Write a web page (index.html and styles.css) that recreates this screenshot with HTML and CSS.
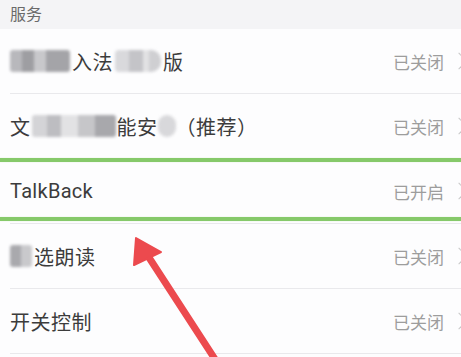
FILE: index.html
```html
<!DOCTYPE html>
<html lang="zh">
<head>
<meta charset="utf-8">
<link rel="stylesheet" href="styles.css">
</head>
<body>
<div class="screen">
  <div class="section-title">服务</div>
  <div class="list">
    <div class="row">
      <div class="label"><span class="mosaic m1"></span>入法<span class="mosaic m2"></span>版</div>
      <div class="status">已关闭<span class="chev"></span></div>
    </div>
    <div class="row">
      <div class="label">文<span class="mosaic m3"></span>能安<span class="mosaic m4"></span>（推荐）</div>
      <div class="status">已关闭<span class="chev"></span></div>
    </div>
    <div class="row">
      <div class="label latin">TalkBack</div>
      <div class="status">已开启<span class="chev"></span></div>
    </div>
    <div class="row">
      <div class="label"><span class="mosaic m5"></span>选朗读</div>
      <div class="status">已关闭<span class="chev"></span></div>
    </div>
    <div class="row">
      <div class="label">开关控制</div>
      <div class="status">已关闭<span class="chev"></span></div>
    </div>
  </div>
  <div class="hl hl-top"></div>
  <div class="hl hl-bottom"></div>
  <svg class="arrow" width="461" height="357" viewBox="0 0 461 357">
    <line x1="148" y1="256" x2="222" y2="370" stroke="#ec4a4e" stroke-width="7" stroke-linecap="round"/>
    <polygon points="136,238 161,252 134,265" fill="#ec4a4e" stroke="#ec4a4e" stroke-width="2" stroke-linejoin="round"/>
  </svg>
</div>
</body>
</html>
```

FILE: styles.css
```css
html, body {
  margin: 0;
  padding: 0;
  background: #fdfdfe;
}
.screen {
  position: relative;
  width: 461px;
  height: 357px;
  overflow: hidden;
  font-family: "Noto Sans CJK SC", "Noto Sans", sans-serif;
  background: #fdfdfe;
}
.section-title {
  height: 29px;
  background: #f4f4f6;
  color: #6a6a6a;
  font-size: 16px;
  line-height: 26px;
  padding-left: 10px;
}
.list {
  display: flex;
  flex-direction: column;
}
.row {
  height: 65px;
  box-sizing: border-box;
  margin-left: 10px;
  border-bottom: 1px solid #e9e9ec;
  display: flex;
  align-items: center;
  justify-content: space-between;
}
.label {
  color: #3c3c3c;
  font-size: 20px;
  display: flex;
  align-items: center;
  letter-spacing: 0.5px;
}
.label.latin {
  font-family: "Roboto", "Noto Sans", sans-serif;
  font-size: 20px;
  letter-spacing: 0.3px;
}
.status {
  color: #9d9d9d;
  font-size: 17px;
  display: flex;
  align-items: center;
  margin-right: -4px;
}
.chev {
  display: inline-block;
  width: 11px;
  height: 11px;
  border-top: 1.5px solid #c8c8c8;
  border-right: 1.5px solid #c8c8c8;
  transform: rotate(45deg);
  margin-left: 9px;
}
.mosaic {
  display: inline-block;
  height: 22px;
  filter: blur(1.5px);
  border-radius: 3px;
}
.m1 {
  width: 60px;
  margin-right: 2px;
  background: linear-gradient(90deg, #b8b8bc 0 20%, #9e9ea2 20% 40%, #c8c8cb 40% 60%, #a4a4a8 60% 100%);
}
.m2 {
  width: 46px;
  margin: 0 2px;
  background: linear-gradient(90deg, #d9d9dc 0 30%, #c4c4c8 30% 60%, #e2e2e4 60% 75%, #cfcfd2 75% 100%);
  border-radius: 4px 10px 10px 4px;
}
.m3 {
  width: 84px;
  margin: 0 1px;
  background: linear-gradient(90deg, #d4d4d7 0 18%, #bdbdc1 18% 35%, #e2e2e4 35% 55%, #c6c6c9 55% 75%, #a8a8ac 75% 100%);
}
.m4 {
  width: 18px;
  margin: 0;
  background: #d8d8db;
  border-radius: 10px;
}
.m5 {
  width: 22px;
  margin-right: 2px;
  background: linear-gradient(90deg, #a9a9ad 0 50%, #c9c9cc 50% 100%);
}
.hl {
  position: absolute;
  left: 0;
  width: 461px;
  height: 4px;
  background: #86c96a;
  box-shadow: 0 0 1px #b7e0a4;
}
.hl-top { top: 158px; }
.hl-bottom { top: 217px; }
.arrow {
  position: absolute;
  left: 0;
  top: 0;
}
```
